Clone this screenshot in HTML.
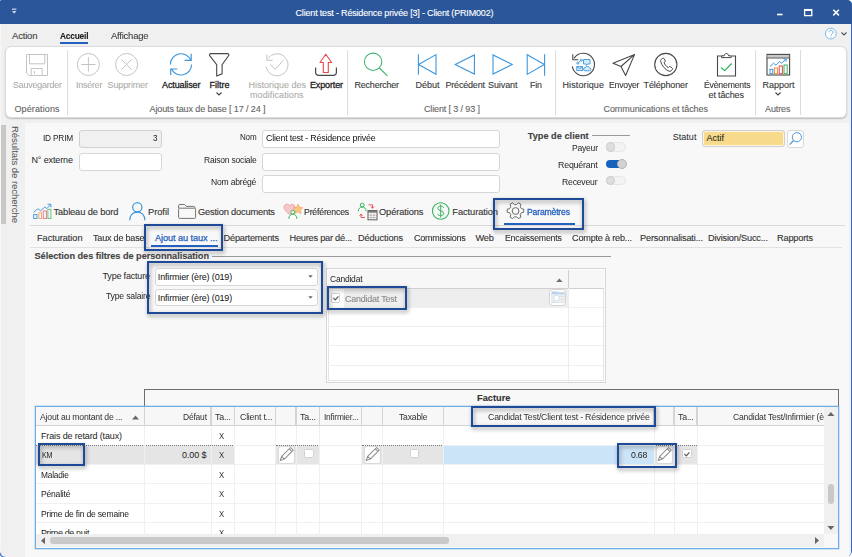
<!DOCTYPE html>
<html lang="fr"><head><meta charset="utf-8"><title>Client test - Résidence privée [3] - Client (PRIM002)</title>
<style>
html,body{margin:0;padding:0;background:#fff;}
body{width:852px;height:557px;overflow:hidden;position:relative;font-family:'Liberation Sans',sans-serif;}
.a{position:absolute;box-sizing:border-box;}
.t{position:absolute;white-space:pre;line-height:12px;transform-origin:0 50%;-webkit-text-stroke:0.12px currentColor;}
svg{position:absolute;overflow:visible;}

.win{left:0;top:0;width:852px;height:557px;background:#2a6dcc;border-radius:2px 5px 6px 3px;}
.body{left:0;top:23.700px;width:851px;height:533.300px;background:#f0f0f0;border-radius:0 0 5px 6px;border-left:1px solid #faf7f3;}
.tbar{left:0;top:0;width:852px;height:23.700px;background:#2b579a;border-radius:2px 5px 0 0;}
.rib{left:5px;top:46px;width:842px;height:72px;background:#fff;border-radius:6px;border:1px solid #dbdbdb;box-shadow:0 1px 1.500px rgba(0,0,0,.22);}
.sep{width:1px;top:50px;height:65px;background:#dcdcdc;}
.panel{left:25px;top:123px;width:824px;height:434px;background:#f8f8f8;}
.inp{background:#fff;border:1px solid #d6d6d6;border-radius:3px;}
.hl{border:2.200px solid #1f4a97;filter:drop-shadow(1.500px 2.500px 2px rgba(0,0,0,.42));}
.line{height:1px;background:#d9d9d9;}

</style></head><body>
<div class="a win"></div><div class="a body"></div><div class="a tbar"></div><svg style="left:12px;top:8px" width="5" height="7" viewBox="0 0 5 7"><path d="M0 1.200h4.400" stroke="#c9d5ea" stroke-width="1.300"/><path d="M0 3h4.400l-2.200 2.700z" fill="#c9d5ea"/></svg><svg style="left:770px;top:4px" width="76" height="16" viewBox="770 4 76 16"><path d="M777 14.5h5.5" stroke="#fff" stroke-width="1.6"/><rect x="804.6" y="9.6" width="7.2" height="6" fill="none" stroke="#fff" stroke-width="1.3"/><path d="M804.6 10h7.2" stroke="#fff" stroke-width="2"/><path d="M833.3 9.8l5.6 5.6M838.9 9.8l-5.6 5.6" stroke="#fff" stroke-width="1.5"/></svg><div class="a" style="left:59.5px;top:42px;width:28.5px;height:2px;background:#2460c0"></div><svg style="left:822px;top:26px" width="28" height="16" viewBox="822 26 28 16"><circle cx="830.800" cy="33.600" r="5.400" fill="#fff" stroke="#7db8e6" stroke-width="1"/><path d="M829 32.2c0-2.6 4-2.6 4 0c0 1.6-2 1.6-2 3.4" fill="none" stroke="#6aaee2" stroke-width="1"/><circle cx="831" cy="37" r="0.6" fill="#6aaee2"/><path d="M841.5 32.5l2.5 2.5l2.5-2.5" fill="none" stroke="#555" stroke-width="1.1"/></svg><div class="a rib"></div><div class="a sep" style="left:67.0px"></div><div class="a sep" style="left:347.0px"></div><div class="a sep" style="left:555.0px"></div><div class="a sep" style="left:755.0px"></div><div class="a sep" style="left:799.5px"></div><svg style="left:215.3px;top:91px" width="8" height="6" viewBox="0 0 8 6"><path d="M1.5 1.5l2.5 2.5l2.5-2.5" fill="none" stroke="#444" stroke-width="1.1"/></svg><svg style="left:774px;top:91px" width="8" height="6" viewBox="0 0 8 6"><path d="M1.5 1.5l2.5 2.5l2.5-2.5" fill="none" stroke="#444" stroke-width="1.1"/></svg><svg style="left:0;top:0" width="852" height="120" viewBox="0 0 852 120"><path d="M26.5 54.5h21v21h-18.5l-2.5-2.5z M29.5 54.5v9.3h15.3v-9.3 M31.2 75.5v-7h11v7 M34.4 71v3" fill="none" stroke="#c4c4c4" stroke-width="1"/><circle cx="88.4" cy="64.5" r="11" fill="none" stroke="#c4c4c4"/><path d="M81.2 64.5h14.4M88.4 57.3v14.4" stroke="#c4c4c4" fill="none"/><circle cx="126.6" cy="64.5" r="11" fill="none" stroke="#c4c4c4"/><path d="M121.4 59.3l10.4 10.4M131.8 59.3l-10.4 10.4" stroke="#c4c4c4" fill="none"/><path d="M170.4 64.4A10.6 10.6 0 0 1 190.760 60.260 M191.200 53.800v6.500h-6.600 M191.600 64.400A10.600 10.600 0 0 1 171.240 68.540 M170.700 75.100v-6.100h6.600" fill="none" stroke="#3c96dc" stroke-width="1.150"/><path d="M210.5 53.6h17a1.3 1.3 0 0 1 1 2.2l-6.4 8.8v9.2l-5.4 2.2v-11.4l-6.8-8.8a1.3 1.3 0 0 1 .6-2.2z" fill="none" stroke="#484848" stroke-width="1.1"/><path d="M267.990 58.490A11 11 0 1 1 266.170 66.710" fill="none" stroke="#c4c4c4"/><path d="M266.800 54.600v5.700h5.800" fill="none" stroke="#c4c4c4"/><path d="M270.5 64.5l4.6 4.9l8.2-9" fill="none" stroke="#c4c4c4"/><path d="M315.6 67.4v5a3 3 0 0 0 3 3h14.8a3 3 0 0 0 3-3v-5" fill="none" stroke="#484848" stroke-width="1.2"/><path d="M325.8 54.2l5.8 8.3h-3.3v10h-5v-10h-3.3z" fill="none" stroke="#e8474a" stroke-width="1.1" stroke-linejoin="round"/><circle cx="373.1" cy="61.8" r="8.7" fill="none" stroke="#3fb56f" stroke-width="1.050"/><path d="M379.4 68l8 7.8" stroke="#3fb56f" stroke-width="1.150"/><path d="M418.4 54.2v20.6M418.6 64.4l17.4-9.8v19.6z" fill="none" stroke="#3c96dc" stroke-width="1.1"/><path d="M455.2 64.5l19.2-9.6v19.2z" fill="none" stroke="#3c96dc" stroke-width="1.1"/><path d="M512.2 64.5l-19.2-9.6v19.2z" fill="none" stroke="#3c96dc" stroke-width="1.1"/><path d="M544.6 54.2v21.6M544.4 64.6l-17.2-9.8v19.6z" fill="none" stroke="#3c96dc" stroke-width="1.1"/><path d="M574.130 58.080A11.200 11.200 0 1 1 572.270 66.440" fill="none" stroke="#484848" stroke-width="1.1"/><path d="M572.800 54.200v5.600h5.600" fill="none" stroke="#484848" stroke-width="1.1"/><g fill="#d7eafa" stroke="#3c96dc" stroke-width=".9"><path d="M583.5 59.5h6.5v4.5h-2.5l-1.2 1.4v-1.4h-2.8z"/><rect x="576.8" y="66.6" width="5.6" height="4"/><path d="M576.8 66.6l2.8 2.2l2.8-2.2" fill="none"/><path d="M585 70.8a1.6 1.6 0 0 1 .3-3.2a2.2 2.2 0 0 1 4.1 .2a1.5 1.5 0 0 1 0 3z"/><circle cx="577.8" cy="63.2" r="1"/><circle cx="581.3" cy="60.2" r="1"/><path d="M578.5 62.5l2.1-1.7" fill="none"/></g><path d="M634.6 54.4l-21.6 8.8l8 3.3l4.6 9l9-21.1l-13.6 12.1" fill="none" stroke="#484848" stroke-width="1.1" stroke-linejoin="round"/><circle cx="665.8" cy="64.5" r="11.1" fill="none" stroke="#484848" stroke-width="1.1"/><path d="M661.2 59.4l1.6-1.1c.5-.3 1-.1 1.300 .4l1.1 2c.2 .5 .1 .9-.3 1.200l-.9 .7c.8 2 2.300 3.800 4.300 5l.8-.8c.4-.4 .9-.4 1.300-.1l1.800 1.300c.5 .4 .5 .9 .2 1.300l-1.200 1.500c-.6 .6-1.400 .7-2.200 .4c-4-1.700-6.900-5.200-8.300-9.500c-.3-.9-.1-1.700 .5-2.300z" fill="none" stroke="#484848" stroke-width="1"/><path d="M721.5 56h-4v20h18v-20h-4" fill="none" stroke="#484848" stroke-width="1.1"/><path d="M721.6 57.600v-1.800h2.600c.2-1.500 1-2.300 2.200-2.300s2 .8 2.200 2.300h2.600v1.800z" fill="#fff" stroke="#484848" stroke-width="1"/><path d="M721 67.600l3.700 3.100l6.900-7.200" fill="none" stroke="#35b55e" stroke-width="1.3"/><rect x="767" y="54.4" width="22.600" height="20.600" fill="#fff" stroke="#484848" stroke-width="1.1"/><rect x="767.5" y="55" width="21.600" height="2.800" fill="#c9c9c9"/><path d="M767 58h22.600" stroke="#484848" stroke-width=".9"/><g fill="none" stroke-width="1"><rect x="770" y="69.3" width="2.800" height="4.400" stroke="#3c96dc"/><rect x="774.4" y="68" width="3" height="5.700" stroke="#f08a3c"/><rect x="779.2" y="66" width="3.200" height="7.700" stroke="#e8474a"/><rect x="784" y="65" width="3.200" height="8.700" stroke="#35b55e"/><path d="M770 66.500l3.500-3.300l2.500 2l3.600-3.700l2.100 1.700l4-4M783.400 58.900h2.700v2.700" stroke="#3c96dc"/></g></svg><div class="a panel"></div><div class="a" style="left:1px;top:125px;width:4.600px;height:98.500px;background:#c8c8c8"></div><div class="a" style="left:8px;top:126px;width:14px;height:100px;"><span style="position:absolute;left:0;top:0;white-space:pre;transform-origin:0 0;transform:translate(13.5px,0) rotate(90deg);font-size:9.600px;line-height:13px;color:#505050;letter-spacing:-0.080px">Résultats de recherche</span></div><div class="a inp" style="left:79px;top:130px;width:82.500px;height:17.500px;background:#f0f0f0;border-color:#d0d0d0"></div><div class="a inp" style="left:79px;top:152.500px;width:82.500px;height:18px"></div><div class="a inp" style="left:262.300px;top:130px;width:238.200px;height:17.5px"></div><div class="a inp" style="left:262.300px;top:152.5px;width:238.200px;height:18px"></div><div class="a inp" style="left:262.300px;top:175px;width:238.200px;height:17.5px"></div><div class="a" style="left:592px;top:135px;width:37.500px;height:1px;background:#9a9a9a"></div><div class="a" style="left:605.700px;top:142.4px;width:20.600px;height:9.200px;border-radius:5px;background:#f3f3f3;border:1px solid #e6e6e6"></div><div class="a" style="left:605.700px;top:142.4px;width:9.200px;height:9.200px;border-radius:5px;background:#dedede;border:1px solid #cbcbcb"></div><div class="a" style="left:605.700px;top:159.8px;width:20.600px;height:8.200px;border-radius:4.500px;background:#1663bd"></div><div class="a" style="left:617.200px;top:159.2px;width:9.400px;height:9.400px;border-radius:5px;background:#d2d2d2;border:1px solid #b4b4b4"></div><div class="a" style="left:605.700px;top:175.7px;width:20.600px;height:9.200px;border-radius:5px;background:#f3f3f3;border:1px solid #e6e6e6"></div><div class="a" style="left:605.700px;top:175.7px;width:9.200px;height:9.200px;border-radius:5px;background:#dedede;border:1px solid #cbcbcb"></div><div class="a inp" style="left:702.400px;top:130px;width:83px;height:17.400px;background:#f7da8b;border-color:#cfcfcf;box-shadow:inset 0 0 0 1px #fdf6e2"></div><div class="a inp" style="left:787.300px;top:130px;width:17.200px;height:17.600px;border-color:#d8d8d8"></div><svg style="left:787px;top:130px" width="18" height="18" viewBox="787 130 18 18"><circle cx="796.900" cy="137.200" r="4.600" fill="none" stroke="#4f97d8" stroke-width="1"/><path d="M793.600 140.500l-4 4.200" stroke="#4f97d8" stroke-width="1.200"/></svg><div class="a" style="left:503.600px;top:223.400px;width:71px;height:2px;background:#2460c0"></div><div class="a line" style="left:30px;top:225.300px;width:815px;"></div><div class="a" style="left:150.500px;top:244.500px;width:67px;height:2px;background:#2460c0"></div><div class="a line" style="left:30px;top:247px;width:812px;background:#e2e2e2"></div><div class="a" style="left:212px;top:255.500px;width:399px;height:1px;background:#9a9a9a"></div><div class="a inp" style="left:155px;top:268.2px;width:162.500px;height:17.700px"></div><svg style="left:308px;top:275.2px" width="5" height="3" viewBox="0 0 5 3"><path d="M0.300 0.300h4.400l-2.200 2.500z" fill="#666"/></svg><div class="a inp" style="left:155px;top:288.6px;width:162.500px;height:17.700px"></div><svg style="left:308px;top:295.6px" width="5" height="3" viewBox="0 0 5 3"><path d="M0.300 0.300h4.400l-2.200 2.500z" fill="#666"/></svg><div class="a" style="left:326px;top:268px;width:280px;height:115px;background:#fff;border:1px solid #d6d6d6;box-shadow:inset 0 0 0 1px #fff,inset 0 0 0 2px #e4e4e4"></div><div class="a" style="left:328px;top:270px;width:276px;height:19px;background:#f7f7f7;border-bottom:1px solid #d0d0d0"></div><div class="a" style="left:567.500px;top:288px;width:1px;height:94px;background:#ececec"></div><div class="a" style="left:567.500px;top:270px;width:1px;height:18px;background:#cfcfcf"></div><div class="a" style="left:328px;top:289px;width:239.500px;height:18.500px;background:#eeeeee"></div><div class="a" style="left:328px;top:306.8px;width:277px;height:1px;background:#f0f0f0"></div><div class="a" style="left:328px;top:326.0px;width:277px;height:1px;background:#f0f0f0"></div><div class="a" style="left:328px;top:345.2px;width:277px;height:1px;background:#f0f0f0"></div><div class="a" style="left:328px;top:364.5px;width:277px;height:1px;background:#f0f0f0"></div><div class="a" style="left:328px;top:289px;width:15.500px;height:18.500px;background:#fdfdfd"></div><svg style="left:555.700px;top:277.800px" width="7" height="4" viewBox="0 0 7 4"><path d="M0.200 4h6.400l-3.200-3.600z" fill="#707070"/></svg><div class="a" style="left:331.3px;top:293.3px;width:9.200px;height:9.400px;background:#fff;border:1px solid #d0d0d0;border-radius:1.500px"></div><svg style="left:331.3px;top:293.3px" width="9" height="9" viewBox="0 0 9 9"><path d="M2.300 4.900l2 2l3.100-3.600" fill="none" stroke="#555" stroke-width="1.100"/></svg><div class="a inp" style="left:549px;top:289px;width:17.200px;height:17px;border-color:#d4d4d4;border-radius:3.500px"></div><svg style="left:549px;top:289px" width="18" height="17" viewBox="549 289 18 17"><rect x="551.800" y="292.300" width="12.400" height="10.400" fill="#f1f1f1" stroke="#d9d9d9" stroke-width=".7"/><path d="M551.800 291.400h5.200l1.200 1.300h6v1.600h-12.400z" fill="#b5d3ee"/><path d="M559.500 296.500h4.700M559.500 299.500h4.700M561.800 294.500v8" stroke="#dedede" stroke-width=".6"/><circle cx="556.500" cy="298" r="2.900" fill="#fff" stroke="#c3ddf3" stroke-width=".9"/><path d="M554.300 300.300l-2.800 3" stroke="#c3ddf3" stroke-width=".9"/></svg><div class="a" style="left:144px;top:389px;width:695.0px;height:17.500px;border:1px solid #6e6e6e;background:#f8f8f8"></div><div class="a" style="left:35px;top:405.7px;width:804.0px;height:143.2px;background:#fff;border:1px solid #6eaee6;box-shadow:0 0 0 0.500px rgba(110,174,230,.55)"></div><div class="a" style="left:36px;top:407px;width:802.0px;height:19px;background:#f7f7f7;border-bottom:1px solid #d2d2d2"></div><div class="a" style="left:36px;top:445.300px;width:198.5px;height:18.800px;background:#e5e5e5"></div><div class="a" style="left:275.5px;top:445.300px;width:44.0px;height:18.800px;background:#e5e5e5"></div><div class="a" style="left:361.5px;top:445.300px;width:82.0px;height:18.800px;background:#e5e5e5"></div><div class="a" style="left:443.5px;top:445.300px;width:210.5px;height:18.800px;background:#cce4f7"></div><div class="a" style="left:654px;top:445.300px;width:43.3px;height:18.800px;background:#e5e5e5"></div><div class="a" style="left:36px;top:444.5px;width:788.0px;height:1px;background:#f0f0f0"></div><div class="a" style="left:36px;top:463.8px;width:788.0px;height:1px;background:#f0f0f0"></div><div class="a" style="left:36px;top:483.2px;width:788.0px;height:1px;background:#f0f0f0"></div><div class="a" style="left:36px;top:502.5px;width:788.0px;height:1px;background:#f0f0f0"></div><div class="a" style="left:36px;top:521.9px;width:788.0px;height:1px;background:#f0f0f0"></div><div class="a" style="left:36px;top:444.800px;width:198.5px;height:0;border-top:1px dotted #777"></div><div class="a" style="left:275.5px;top:444.800px;width:44.0px;height:0;border-top:1px dotted #777"></div><div class="a" style="left:361.5px;top:444.800px;width:82.0px;height:0;border-top:1px dotted #777"></div><div class="a" style="left:654px;top:444.800px;width:43.3px;height:0;border-top:1px dotted #777"></div><div class="a" style="left:143.5px;top:407px;width:1.600px;height:19px;background:#d4d4d4"></div><div class="a" style="left:144.0px;top:426px;width:1px;height:108.500px;background:#f0f0f0"></div><div class="a" style="left:210.0px;top:407px;width:1.600px;height:19px;background:#d4d4d4"></div><div class="a" style="left:210.5px;top:426px;width:1px;height:108.500px;background:#f0f0f0"></div><div class="a" style="left:233.5px;top:407px;width:1.600px;height:19px;background:#d4d4d4"></div><div class="a" style="left:234.0px;top:426px;width:1px;height:108.500px;background:#f0f0f0"></div><div class="a" style="left:274.5px;top:407px;width:1.600px;height:19px;background:#d4d4d4"></div><div class="a" style="left:275.0px;top:426px;width:1px;height:108.500px;background:#f0f0f0"></div><div class="a" style="left:295.0px;top:407px;width:1.600px;height:19px;background:#d4d4d4"></div><div class="a" style="left:295.5px;top:426px;width:1px;height:108.500px;background:#f0f0f0"></div><div class="a" style="left:318.5px;top:407px;width:1.600px;height:19px;background:#d4d4d4"></div><div class="a" style="left:319.0px;top:426px;width:1px;height:108.500px;background:#f0f0f0"></div><div class="a" style="left:360.5px;top:407px;width:1.600px;height:19px;background:#d4d4d4"></div><div class="a" style="left:361.0px;top:426px;width:1px;height:108.500px;background:#f0f0f0"></div><div class="a" style="left:381.5px;top:407px;width:1.600px;height:19px;background:#d4d4d4"></div><div class="a" style="left:382.0px;top:426px;width:1px;height:108.500px;background:#f0f0f0"></div><div class="a" style="left:442.5px;top:407px;width:1.600px;height:19px;background:#d4d4d4"></div><div class="a" style="left:443.0px;top:426px;width:1px;height:108.500px;background:#f0f0f0"></div><div class="a" style="left:653.0px;top:407px;width:1.600px;height:19px;background:#d4d4d4"></div><div class="a" style="left:653.5px;top:426px;width:1px;height:108.500px;background:#f0f0f0"></div><div class="a" style="left:673.0px;top:407px;width:1.600px;height:19px;background:#d4d4d4"></div><div class="a" style="left:673.5px;top:426px;width:1px;height:108.500px;background:#f0f0f0"></div><div class="a" style="left:696.3px;top:407px;width:1.600px;height:19px;background:#d4d4d4"></div><div class="a" style="left:696.8px;top:426px;width:1px;height:108.500px;background:#f0f0f0"></div><svg style="left:132px;top:414.500px" width="7" height="5" viewBox="0 0 7 5"><path d="M0 4.500h7l-3.500-4z" fill="#666"/></svg><div class="a" style="left:36px;top:523px;width:789px;height:11.500px;overflow:hidden"><span class="t" style="left:5px;top:3.600px;font-size:9px;color:#222;letter-spacing:-0.378px;-webkit-text-stroke:0">Prime de nuit</span><span class="t" style="left:183.400px;top:3.900px;font-size:8.800px;color:#333;-webkit-text-stroke:0;transform:scaleX(.88)">X</span></div><div class="a inp" style="left:277.5px;top:446px;width:17.500px;height:17.500px;border-color:#dadada"></div><svg style="left:277.5px;top:446px" width="18" height="18" viewBox="0 0 18 18"><path transform="translate(-2.200,-1.200) scale(1.120)" d="M4 14l1.200-3.600l8-8l2.400 2.400l-8 8z M5.200 10.400l2.400 2.400 M12 3.600l2.400 2.400" fill="none" stroke="#8c8c8c" stroke-width=".9" stroke-linejoin="round"/></svg><div class="a inp" style="left:363.5px;top:446px;width:17.500px;height:17.500px;border-color:#dadada"></div><svg style="left:363.5px;top:446px" width="18" height="18" viewBox="0 0 18 18"><path transform="translate(-2.200,-1.200) scale(1.120)" d="M4 14l1.200-3.600l8-8l2.400 2.400l-8 8z M5.200 10.400l2.400 2.400 M12 3.600l2.400 2.400" fill="none" stroke="#8c8c8c" stroke-width=".9" stroke-linejoin="round"/></svg><div class="a inp" style="left:655.5px;top:446px;width:17.500px;height:17.500px;border-color:#dadada"></div><svg style="left:655.5px;top:446px" width="18" height="18" viewBox="0 0 18 18"><path transform="translate(-2.200,-1.200) scale(1.120)" d="M4 14l1.200-3.600l8-8l2.400 2.400l-8 8z M5.200 10.400l2.400 2.400 M12 3.600l2.400 2.400" fill="none" stroke="#8c8c8c" stroke-width=".9" stroke-linejoin="round"/></svg><div class="a" style="left:304.4px;top:448.9px;width:9.200px;height:9.400px;background:#fff;border:1px solid #d0d0d0;border-radius:1.500px"></div><div class="a" style="left:409.5px;top:448.9px;width:9.200px;height:9.400px;background:#fff;border:1px solid #d0d0d0;border-radius:1.500px"></div><div class="a" style="left:682.4px;top:448.9px;width:9.200px;height:9.400px;background:#fff;border:1px solid #d0d0d0;border-radius:1.500px"></div><svg style="left:682.4px;top:448.9px" width="9" height="9" viewBox="0 0 9 9"><path d="M2.300 4.900l2 2l3.100-3.600" fill="none" stroke="#555" stroke-width="1.100"/></svg><div class="a" style="left:824px;top:406.7px;width:14.0px;height:128px;background:#f0f0f0"></div><div class="a" style="left:36px;top:534.300px;width:802.0px;height:13px;background:#f0f0f0"></div><div class="a" style="left:824px;top:534.300px;width:14.0px;height:13.600px;background:#f8f8f8"></div><div class="a" style="left:827.500px;top:483.700px;width:6px;height:20px;border-radius:3px;background:#c9c9c9"></div><div class="a" style="left:49.500px;top:537.400px;width:399.500px;height:6.400px;border-radius:3px;background:#c9c9c9"></div><svg style="left:0;top:0" width="852" height="557" viewBox="0 0 852 557"><path d="M827.400 416h7l-3.500-4z M827.400 526h7l-3.500 4z M45 537.200v7l-4-3.500z M815 537v7l4-3.500z" fill="#666"/></svg><svg style="left:0;top:0" width="852" height="557" viewBox="0 0 852 557"><g fill="none" stroke-width="1"><rect x="33.600" y="214.500" width="3.400" height="4" stroke="#5aa0da" fill="#eaf3fb"/><rect x="38.900" y="212.800" width="2.600" height="5.700" stroke="#f0a878"/><rect x="43.300" y="211" width="3.100" height="7.500" stroke="#ea7c82"/><rect x="47.900" y="209.300" width="3" height="9.200" stroke="#6cc48a"/><path d="M33.600 212.300l4.300-3.600l2.800 2.100l4.200-3.900l1.800 1.800l4.200-4.600M47.600 204.200h3.300v3.200" stroke="#4a9ede"/></g><circle cx="137.300" cy="207.300" r="4.600" fill="none" stroke="#3c96dc" stroke-width="1.200"/><path d="M129.800 220.300c0-5.400 3.300-8.200 7.500-8.200s7.500 2.800 7.500 8.200" fill="none" stroke="#3c96dc" stroke-width="1.200"/><path d="M178.600 208.200v-2.400q0-1.300 1.300-1.300h4.600l1.900 1.900h7.200q1.300 0 1.300 1.300v.5 M179.600 208.200h15q1 0 1 1v8.200q0 1-1 1h-15q-1 0-1-1v-8.200q0-1 1-1z" fill="none" stroke="#6e6e6e" stroke-width=".95"/><path d="M289.500 214.500c-3-2.300-5.500-4.300-5.500-7.200c0-1.800 1.300-3.100 2.900-3.100c1.100 0 2.100 .6 2.600 1.600c.5-1 1.500-1.600 2.600-1.600c1.600 0 2.900 1.300 2.900 3.100c0 2.900-2.500 4.900-5.500 7.200z" fill="#f6c6cc" stroke="#ee9aa6" stroke-width=".8"/><path d="M298 204.200l1.500 3.200l3.400 .4l-2.500 2.300l.7 3.400l-3.100-1.700l-3.100 1.700l.7-3.400l-2.500-2.300l3.400-.4z" fill="#fbc585" stroke="#f09a40" stroke-width=".6"/><circle cx="292.800" cy="212.200" r="1.900" fill="#fff" stroke="#35b55e" stroke-width="1"/><path d="M288.800 218.800c0-3 1.800-4.500 4-4.500s4 1.500 4 4.500" fill="#fff" stroke="#35b55e" stroke-width="1"/><circle cx="362.200" cy="205" r="1.900" fill="none" stroke="#35b55e" stroke-width="1"/><path d="M358.300 211.300c0-2.800 1.700-4.200 3.900-4.200s3.900 1.400 3.900 4.200" fill="none" stroke="#35b55e" stroke-width="1"/><path d="M368.500 204.800h4v3.500M371 206.500l1.500 1.800l1.500-1.800 M365 217.500h-4v-3.500M362.500 215.800l-1.500-1.800l-1.500 1.800" fill="none" stroke="#e8474a" stroke-width=".9"/><rect x="368" y="210.500" width="9" height="9.300" fill="#fff" stroke="#5a5a5a" stroke-width="1"/><rect x="368" y="210.500" width="9" height="2.200" fill="#7a7a7a"/><path d="M368 215.200h9M368 217.500h9M371 213v6.800M374 213v6.800" stroke="#9a9a9a" stroke-width=".6"/><circle cx="440.700" cy="211" r="8.300" fill="none" stroke="#35b55e" stroke-width="1.100"/><path d="M443.600 207.800c-.5-1.100-1.500-1.700-2.900-1.700c-1.700 0-2.900 .9-2.900 2.300c0 3 5.900 1.700 5.900 4.900c0 1.500-1.300 2.400-3 2.400c-1.600 0-2.700-.7-3.200-1.900M440.700 204.500v13" fill="none" stroke="#35b55e" stroke-width="1"/><path d="M523.77 209.21L523.77 212.19L521.33 212.80L520.24 214.70L520.92 217.12L518.35 218.60L516.60 216.80L514.40 216.80L512.65 218.60L510.08 217.12L510.76 214.70L509.67 212.80L507.23 212.19L507.23 209.21L509.67 208.60L510.76 206.70L510.08 204.28L512.65 202.80L514.40 204.60L516.60 204.60L518.35 202.80L520.92 204.28L520.24 206.70L521.33 208.60z" fill="none" stroke="#6a6a6a" stroke-width="1" stroke-linejoin="round"/><circle cx="515.600" cy="211" r="3.400" fill="none" stroke="#6a6a6a" stroke-width="1"/></svg>
<span class="t" style="left:295.5px;top:7.1px;font-size:9px;letter-spacing:-0.175px;color:#fff;">Client test - Résidence privée [3] - Client (PRIM002)</span><span class="t" style="left:12.0px;top:29.6px;font-size:9.5px;letter-spacing:-0.181px;color:#444;">Action</span><span class="t" style="left:59.5px;top:29.6px;font-size:9.5px;letter-spacing:-0.220px;color:#222;font-weight:700;transform:scaleX(0.8775);">Accueil</span><span class="t" style="left:111.0px;top:29.6px;font-size:9.5px;letter-spacing:-0.220px;color:#444;transform:scaleX(0.9949);">Affichage</span><span class="t" style="left:12.5px;top:78.7px;font-size:9px;letter-spacing:-0.220px;color:#b0aeac;transform:scaleX(0.9930);">Sauvegarder</span><span class="t" style="left:14.5px;top:102.9px;font-size:9px;letter-spacing:0.108px;color:#666;">Opérations</span><span class="t" style="left:75.5px;top:78.7px;font-size:9px;letter-spacing:-0.220px;color:#b0aeac;transform:scaleX(0.9927);">Insérer</span><span class="t" style="left:107.5px;top:78.7px;font-size:9px;letter-spacing:-0.127px;color:#b0aeac;">Supprimer</span><span class="t" style="left:162.0px;top:78.7px;font-size:9px;letter-spacing:-0.113px;color:#222;-webkit-text-stroke:0.3px #222;">Actualiser</span><span class="t" style="left:209.5px;top:78.7px;font-size:9px;letter-spacing:0.000px;color:#222;-webkit-text-stroke:0.3px #222;">Filtre</span><span class="t" style="left:248.5px;top:78.7px;font-size:9px;letter-spacing:-0.002px;color:#b0aeac;">Historique des</span><span class="t" style="left:250.0px;top:88.7px;font-size:9px;letter-spacing:0.081px;color:#b0aeac;">modifications</span><span class="t" style="left:310.0px;top:78.7px;font-size:9px;letter-spacing:-0.145px;color:#222;-webkit-text-stroke:0.3px #222;">Exporter</span><span class="t" style="left:149.5px;top:102.9px;font-size:9px;letter-spacing:-0.103px;color:#666;">Ajouts taux de base [ 17 / 24 ]</span><span class="t" style="left:354.5px;top:78.7px;font-size:9px;letter-spacing:-0.220px;color:#3a3a3a;">Rechercher</span><span class="t" style="left:415.5px;top:78.7px;font-size:9px;letter-spacing:-0.008px;color:#3a3a3a;">Début</span><span class="t" style="left:445.5px;top:78.7px;font-size:9px;letter-spacing:-0.191px;color:#3a3a3a;">Précédent</span><span class="t" style="left:488.0px;top:78.7px;font-size:9px;letter-spacing:-0.089px;color:#3a3a3a;">Suivant</span><span class="t" style="left:530.0px;top:78.7px;font-size:9px;letter-spacing:-0.220px;color:#3a3a3a;transform:scaleX(0.9937);">Fin</span><span class="t" style="left:424.0px;top:102.9px;font-size:9px;letter-spacing:-0.127px;color:#666;">Client [ 3 / 93 ]</span><span class="t" style="left:562.5px;top:78.7px;font-size:9px;letter-spacing:0.108px;color:#3a3a3a;">Historique</span><span class="t" style="left:609.0px;top:78.7px;font-size:9px;letter-spacing:-0.220px;color:#3a3a3a;transform:scaleX(0.9618);">Envoyer</span><span class="t" style="left:643.5px;top:78.7px;font-size:9px;letter-spacing:-0.116px;color:#3a3a3a;">Téléphoner</span><span class="t" style="left:703.5px;top:78.7px;font-size:9px;letter-spacing:-0.220px;color:#3a3a3a;transform:scaleX(0.9677);">Évènements</span><span class="t" style="left:708.5px;top:88.7px;font-size:9px;letter-spacing:-0.129px;color:#3a3a3a;">et tâches</span><span class="t" style="left:603.5px;top:102.9px;font-size:9px;letter-spacing:-0.068px;color:#666;">Communications et tâches</span><span class="t" style="left:762.5px;top:78.7px;font-size:9px;letter-spacing:-0.005px;color:#3a3a3a;">Rapport</span><span class="t" style="left:765.0px;top:102.9px;font-size:9px;letter-spacing:-0.103px;color:#666;">Autres</span><span class="t" style="left:43.0px;top:131.6px;font-size:9px;letter-spacing:-0.220px;color:#262626;transform:scaleX(0.9237);-webkit-text-stroke:0;">ID PRIM</span><span class="t" style="left:31.5px;top:154.4px;font-size:9px;letter-spacing:-0.125px;color:#262626;-webkit-text-stroke:0;">N° externe</span><span class="t" style="left:153.0px;top:132.1px;font-size:9px;letter-spacing:0.000px;color:#222;transform:scaleX(0.8972);-webkit-text-stroke:0;">3</span><span class="t" style="left:239.7px;top:131.3px;font-size:9px;letter-spacing:-0.220px;color:#262626;transform:scaleX(0.8936);-webkit-text-stroke:0;">Nom</span><span class="t" style="left:203.5px;top:154.1px;font-size:9px;letter-spacing:-0.220px;color:#262626;transform:scaleX(0.9484);-webkit-text-stroke:0;">Raison sociale</span><span class="t" style="left:211.0px;top:176.1px;font-size:9px;letter-spacing:-0.220px;color:#262626;transform:scaleX(0.9527);-webkit-text-stroke:0;">Nom abrégé</span><span class="t" style="left:266.4px;top:132.3px;font-size:9px;letter-spacing:-0.220px;color:#111;transform:scaleX(0.9858);-webkit-text-stroke:0;">Client test - Résidence privée</span><span class="t" style="left:527.7px;top:129.7px;font-size:9.2px;letter-spacing:0.024px;color:#444;font-weight:700;">Type de client</span><span class="t" style="left:572.0px;top:142.1px;font-size:9px;letter-spacing:-0.220px;color:#262626;transform:scaleX(0.9478);-webkit-text-stroke:0;">Payeur</span><span class="t" style="left:558.4px;top:159.4px;font-size:9px;letter-spacing:-0.220px;color:#262626;transform:scaleX(0.9833);-webkit-text-stroke:0;">Requérant</span><span class="t" style="left:562.4px;top:175.7px;font-size:9px;letter-spacing:-0.220px;color:#262626;transform:scaleX(0.9624);-webkit-text-stroke:0;">Receveur</span><span class="t" style="left:672.8px;top:131.1px;font-size:9px;letter-spacing:0.017px;color:#262626;-webkit-text-stroke:0;">Statut</span><span class="t" style="left:706.5px;top:132.1px;font-size:9px;letter-spacing:-0.004px;color:#111;-webkit-text-stroke:0;">Actif</span><span class="t" style="left:53.5px;top:206.1px;font-size:9.3px;letter-spacing:-0.121px;color:#333;">Tableau de bord</span><span class="t" style="left:148.0px;top:206.1px;font-size:9.3px;letter-spacing:-0.037px;color:#333;">Profil</span><span class="t" style="left:198.0px;top:206.1px;font-size:9.3px;letter-spacing:-0.194px;color:#333;">Gestion documents</span><span class="t" style="left:304.2px;top:206.1px;font-size:9.3px;letter-spacing:-0.220px;color:#333;transform:scaleX(0.9428);">Préférences</span><span class="t" style="left:379.0px;top:206.1px;font-size:9.3px;letter-spacing:-0.109px;color:#333;">Opérations</span><span class="t" style="left:452.3px;top:206.1px;font-size:9.3px;letter-spacing:-0.082px;color:#333;">Facturation</span><span class="t" style="left:527.0px;top:206.1px;font-size:9.3px;letter-spacing:-0.220px;color:#2460c0;transform:scaleX(0.9331);-webkit-text-stroke:0.300px #2460c0;">Paramètres</span><span class="t" style="left:37.0px;top:231.6px;font-size:9.2px;letter-spacing:-0.047px;color:#333;">Facturation</span><span class="t" style="left:92.5px;top:231.6px;font-size:9.2px;letter-spacing:-0.220px;color:#333;transform:scaleX(0.9859);">Taux de base</span><span class="t" style="left:223.6px;top:231.6px;font-size:9.2px;letter-spacing:-0.211px;color:#333;">Départements</span><span class="t" style="left:289.5px;top:231.6px;font-size:9.2px;letter-spacing:-0.220px;color:#333;">Heures par dé...</span><span class="t" style="left:358.0px;top:231.6px;font-size:9.2px;letter-spacing:-0.108px;color:#333;">Déductions</span><span class="t" style="left:413.6px;top:231.6px;font-size:9.2px;letter-spacing:-0.220px;color:#333;transform:scaleX(0.9785);">Commissions</span><span class="t" style="left:475.4px;top:231.6px;font-size:9.2px;letter-spacing:-0.067px;color:#333;">Web</span><span class="t" style="left:504.6px;top:231.6px;font-size:9.2px;letter-spacing:-0.220px;color:#333;transform:scaleX(0.9519);">Encaissements</span><span class="t" style="left:572.0px;top:231.6px;font-size:9.2px;letter-spacing:-0.220px;color:#333;transform:scaleX(0.9959);">Compte à reb...</span><span class="t" style="left:640.0px;top:231.6px;font-size:9.2px;letter-spacing:-0.148px;color:#333;">Personnalisati...</span><span class="t" style="left:708.0px;top:231.6px;font-size:9.2px;letter-spacing:-0.188px;color:#333;">Division/Succ...</span><span class="t" style="left:777.0px;top:231.6px;font-size:9.2px;letter-spacing:-0.183px;color:#333;">Rapports</span><span class="t" style="left:155.0px;top:231.6px;font-size:9.2px;letter-spacing:-0.084px;color:#2460c0;-webkit-text-stroke:0.250px #2460c0;">Ajout au taux ...</span><span class="t" style="left:34.5px;top:250.1px;font-size:9.2px;letter-spacing:-0.041px;color:#444;font-weight:700;">Sélection des filtres de personnalisation</span><span class="t" style="left:102.5px;top:270.1px;font-size:9px;letter-spacing:-0.185px;color:#262626;-webkit-text-stroke:0;">Type facture</span><span class="t" style="left:105.5px;top:290.1px;font-size:9px;letter-spacing:-0.220px;color:#262626;transform:scaleX(0.9651);-webkit-text-stroke:0;">Type salaire</span><span class="t" style="left:157.8px;top:271.2px;font-size:9px;letter-spacing:-0.156px;color:#111;-webkit-text-stroke:0;">Infirmier (ère) (019)</span><span class="t" style="left:157.8px;top:291.6px;font-size:9px;letter-spacing:-0.156px;color:#111;-webkit-text-stroke:0;">Infirmier (ère) (019)</span><span class="t" style="left:330.0px;top:273.1px;font-size:9px;letter-spacing:-0.220px;color:#222;transform:scaleX(0.9423);-webkit-text-stroke:0;">Candidat</span><span class="t" style="left:345.0px;top:292.6px;font-size:9.3px;letter-spacing:-0.220px;color:#8a8a8a;transform:scaleX(0.9621);">Candidat Test</span><span class="t" style="left:477.0px;top:392.1px;font-size:9.2px;letter-spacing:0.049px;color:#333;font-weight:700;">Facture</span><span class="t" style="left:39.5px;top:410.6px;font-size:9px;letter-spacing:-0.220px;color:#333;transform:scaleX(0.9624);-webkit-text-stroke:0;">Ajout au montant de ...</span><span class="t" style="left:183.0px;top:410.6px;font-size:9px;letter-spacing:-0.220px;color:#333;transform:scaleX(0.9437);-webkit-text-stroke:0;">Défaut</span><span class="t" style="left:214.5px;top:410.6px;font-size:9px;letter-spacing:-0.220px;color:#333;transform:scaleX(0.9916);-webkit-text-stroke:0;">Ta...</span><span class="t" style="left:240.0px;top:410.6px;font-size:9px;letter-spacing:-0.220px;color:#333;transform:scaleX(0.9755);-webkit-text-stroke:0;">Client t...</span><span class="t" style="left:300.0px;top:410.6px;font-size:9px;letter-spacing:-0.220px;color:#333;transform:scaleX(0.9916);-webkit-text-stroke:0;">Ta...</span><span class="t" style="left:323.5px;top:410.6px;font-size:9px;letter-spacing:-0.220px;color:#333;transform:scaleX(0.9300);-webkit-text-stroke:0;">Infirmier...</span><span class="t" style="left:398.5px;top:410.6px;font-size:9px;letter-spacing:-0.220px;color:#333;transform:scaleX(0.9592);-webkit-text-stroke:0;">Taxable</span><span class="t" style="left:487.5px;top:410.9px;font-size:9px;letter-spacing:-0.220px;color:#333;transform:scaleX(0.9784);-webkit-text-stroke:0;">Candidat Test/Client test - Résidence privée</span><span class="t" style="left:677.7px;top:410.6px;font-size:9px;letter-spacing:-0.220px;color:#333;transform:scaleX(0.9792);-webkit-text-stroke:0;">Ta...</span><span class="t" style="left:732.7px;top:410.9px;font-size:9px;letter-spacing:-0.220px;color:#333;transform:scaleX(0.9590);-webkit-text-stroke:0;">Candidat Test/Infirmier (è</span><span class="t" style="left:41.0px;top:430.1px;font-size:9px;letter-spacing:-0.144px;color:#222;-webkit-text-stroke:0;">Frais de retard (taux)</span><span class="t" style="left:41.5px;top:449.1px;font-size:9px;letter-spacing:-0.220px;color:#222;transform:scaleX(0.7907);-webkit-text-stroke:0;">KM</span><span class="t" style="left:41.0px;top:469.1px;font-size:9px;letter-spacing:-0.220px;color:#222;transform:scaleX(0.9268);-webkit-text-stroke:0;">Maladie</span><span class="t" style="left:41.0px;top:488.4px;font-size:9px;letter-spacing:-0.220px;color:#222;transform:scaleX(0.9519);-webkit-text-stroke:0;">Pénalité</span><span class="t" style="left:41.0px;top:507.8px;font-size:9px;letter-spacing:-0.220px;color:#222;transform:scaleX(0.9542);-webkit-text-stroke:0;">Prime de fin de semaine</span><span class="t" style="left:182.0px;top:449.1px;font-size:9px;letter-spacing:-0.106px;color:#222;-webkit-text-stroke:0;">0.00 $</span><span class="t" style="left:631.4px;top:449.1px;font-size:9px;letter-spacing:-0.220px;color:#222;transform:scaleX(0.9721);-webkit-text-stroke:0;">0.68</span><span class="t" style="left:219.4px;top:429.9px;font-size:8.8px;letter-spacing:0.000px;color:#333;transform:scaleX(0.8851);-webkit-text-stroke:0;">X</span><span class="t" style="left:219.4px;top:449.4px;font-size:8.8px;letter-spacing:0.000px;color:#333;transform:scaleX(0.8851);-webkit-text-stroke:0;">X</span><span class="t" style="left:219.4px;top:468.9px;font-size:8.8px;letter-spacing:0.000px;color:#333;transform:scaleX(0.8851);-webkit-text-stroke:0;">X</span><span class="t" style="left:219.4px;top:488.2px;font-size:8.8px;letter-spacing:0.000px;color:#333;transform:scaleX(0.8851);-webkit-text-stroke:0;">X</span><span class="t" style="left:219.4px;top:507.6px;font-size:8.8px;letter-spacing:0.000px;color:#333;transform:scaleX(0.8851);-webkit-text-stroke:0;">X</span>
<div class="a hl" style="left:493.4px;top:197.7px;width:90.8px;height:32.1px"></div><div class="a hl" style="left:144px;top:224px;width:79.4px;height:26.9px"></div><div class="a hl" style="left:146.7px;top:260.8px;width:176.3px;height:53.4px"></div><div class="a hl" style="left:327.3px;top:285.8px;width:79.4px;height:24.3px"></div><div class="a hl" style="left:471px;top:406px;width:184.6px;height:20.6px"></div><div class="a hl" style="left:38.1px;top:442.9px;width:46.7px;height:23.3px"></div><div class="a hl" style="left:617px;top:442.9px;width:59.9px;height:25.0px"></div>
</body></html>
